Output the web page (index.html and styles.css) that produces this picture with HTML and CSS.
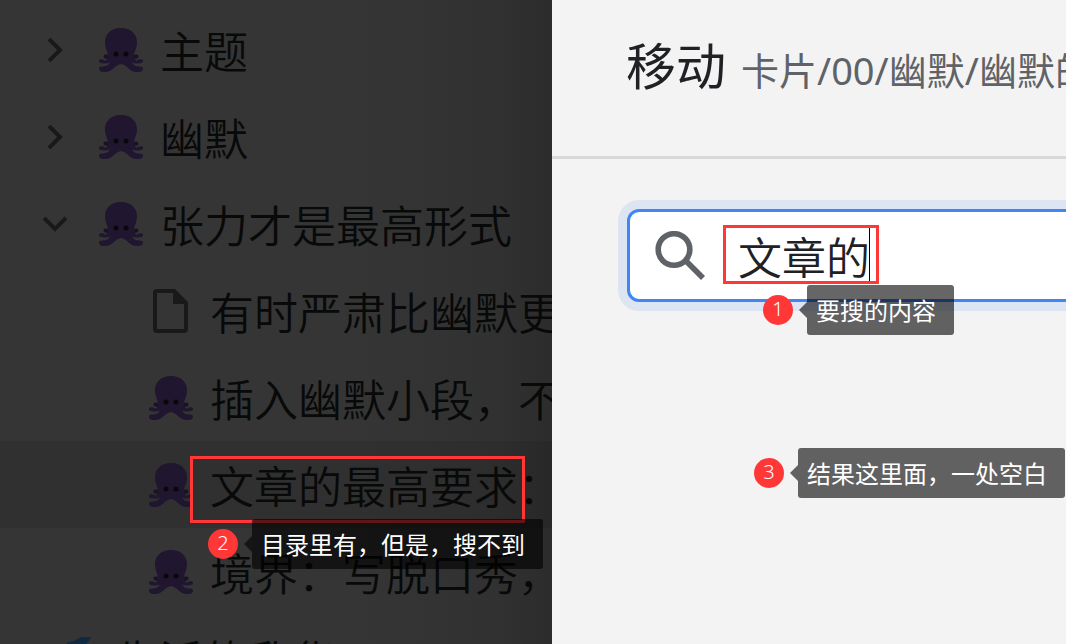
FILE: index.html
```
<!DOCTYPE html>
<html lang="zh-CN">
<head>
<meta charset="utf-8">
<title>移动</title>
<link rel="stylesheet" href="styles.css">
</head>
<body>
<svg class="defs" aria-hidden="true">
  <symbol id="octopus" viewBox="0 0 44 44">
    <path class="octo-arm" d="M6.500 28.500q2-.5 3 1.500l3 1M37.500 28.500q-2-.5-3 1.500l-3 1"/>
    <path class="octo-body" d="M22 0C11 0 6 7 6 14c0 7 3 9 3 15 0 2-1 3.500-3 3.500-2-1.500-5-1.500-6-.5s0 3.500 5 3.500c3 0 4-.3 6-1.300-2 3.500-4 4.300-8 4.300-2 0-3 .7-3 2 0 3 3 3.500 6 3.500 8 0 9-7 16-8 7 1 8 8 16 8 3 0 6-.5 6-3.500 0-1.300-1-2-3-2-4 0-6-.8-8-4.300 2 1 3 1.300 6 1.300 5 0 6-2.500 5-3.500s-4-1-6 .5c-2 0-3-1.500-3-3.500 0-6 3-8 3-15C38 7 33 0 22 0z"/>
    <circle class="octo-eye" cx="17" cy="26" r="2.5"/><circle class="octo-eye" cx="27" cy="26" r="2.5"/>
  </symbol>
  <symbol id="chevron" viewBox="0 0 24 24"><path class="chevron-line" d="M6 1l11 11L6 23"/></symbol>
  <symbol id="file" viewBox="0 0 36 44">
    <path class="file-shape" fill-rule="evenodd" d="M4 0h18l13 13v27a4 4 0 0 1-4 4H4a4 4 0 0 1-4-4V4a4 4 0 0 1 4-4zm0 4v36h27V15H20V4z"/>
  </symbol>
</svg>
<main class="screen">
  <nav class="sidebar" aria-label="目录">
    <ul class="tree">
      <li class="row"><svg class="chevron"><use href="#chevron"/></svg><svg class="icon"><use href="#octopus"/></svg><span>主题</span></li>
      <li class="row"><svg class="chevron"><use href="#chevron"/></svg><svg class="icon"><use href="#octopus"/></svg><span>幽默</span></li>
      <li class="row"><svg class="chevron open"><use href="#chevron"/></svg><svg class="icon"><use href="#octopus"/></svg><span>张力才是最高形式</span></li>
      <li class="row child"><svg class="icon"><use href="#file"/></svg><span>有时严肃比幽默更</span></li>
      <li class="row child"><svg class="icon"><use href="#octopus"/></svg><span>插入幽默小段，不</span></li>
      <li class="row child selected"><svg class="icon"><use href="#octopus"/></svg><span>文章的最高要求：</span></li>
      <li class="row child"><svg class="icon"><use href="#octopus"/></svg><span>境界：写脱口秀，</span></li>
      <li class="row root"><svg class="icon" viewBox="0 0 44 44"><path class="dolphin" d="M1 30C3 14 10 5 20 4c5-4 10-5 17-4-1 4-4 6-7 9 8 7 10 18 7 30-4-9-12-14-20-14-7 0-13 2-16 5z"/></svg><span>生活的乱华</span></li>
    </ul>
    <div class="mark mark-tree"></div>
    <div class="note note-tree"><b class="badge">2</b><span class="tip dark">目录里有，但是，搜不到</span></div>
  </nav>
  <section class="dialog">
    <header class="header"><h1 class="title">移动</h1><span class="path">卡片/00/幽默/幽默的</span></header>
    <div class="body">
      <label class="search">
        <svg class="glass" viewBox="0 0 50 50"><circle cx="19" cy="18.500" r="15.800"/><path class="handle" d="M31 30L48 47"/></svg>
        <input class="field" type="text" value="文章的" aria-label="搜索">
      </label>
    </div>
    <i class="caret"></i>
    <div class="mark mark-search"></div>
    <div class="note note-search"><b class="badge">1</b><span class="tip">要搜的内容</span></div>
    <div class="note note-result"><b class="badge">3</b><span class="tip">结果这里面，一处空白</span></div>
  </section>
</main>
</body>
</html>
```
FILE: styles.css
```
* { box-sizing: border-box; }
body { margin: 0; font-family: "Noto Sans", "Noto Sans CJK SC", sans-serif; }
.defs { position: absolute; width: 0; height: 0; }
.screen { display: grid; grid-template-columns: 276fr 257fr; height: 100vh; overflow: hidden; }

.sidebar { position: relative; min-width: 0; overflow: hidden; padding-top: 6px;
  background: linear-gradient(to right, #353535 65%, #313131 90%, #2c2c2c); }
.tree { list-style: none; margin: 0; padding: 0; }
.row { display: flex; align-items: center; height: 87px; padding-left: 43px; white-space: nowrap;
  color: #080909; font-size: 44px; line-height: 64px; font-family: "Noto Sans CJK SC", sans-serif; font-weight: 350; }
.row.child { padding-left: 149px; }
.row.root { padding-left: 54px; }
.row.selected { background: rgba(0, 0, 0, 0.08); }
.chevron { width: 24px; height: 24px; margin-right: 32px; flex: none; }
.chevron.open { transform: rotate(90deg); }
.icon { width: 44px; height: 44px; margin-right: 17px; flex: none; }
.chevron-line { fill: none; stroke: #17191b; stroke-width: 4; }
.file-shape { fill: #17191b; }
.octo-body { fill: #20162f; }
.octo-arm { fill: none; stroke: #1a1226; stroke-width: 4; stroke-linecap: round; }
.octo-eye { fill: #08080a; }
.dolphin { fill: #102a42; }

.dialog { position: relative; min-width: 0; overflow: hidden; background: #f3f3f3; color: #202124; }
.header { display: flex; align-items: baseline; gap: 15px; height: 159px; padding: 30px 0 0 74px;
  border-bottom: 3px solid #d9d9d9; white-space: nowrap; }
.title { margin: 0; font-size: 50px; line-height: 72px; font-weight: 400; }
.path { color: #5f6368; font-size: 38px; line-height: 56px; font-weight: 400; }
.body { padding: 50px 0 0 75px; }
.search { display: flex; align-items: center; height: 93px; margin-right: -20px; padding-left: 25px; gap: 33px;
  background: #fff; border: 3px solid #4285f4; border-radius: 12px; box-shadow: 0 0 0 9px #dde4f2; }
.glass { width: 50px; height: 50px; flex: none; fill: none; stroke: #5f6368; stroke-width: 5.6; }
.field { flex: 1; min-width: 0; height: 64px; padding: 0; border: 0; outline: 0; background: none; color: #202124;
  font: 350 44px/64px "Noto Sans CJK SC", sans-serif; }
.caret { position: absolute; left: 317px; top: 228px; width: 1px; height: 54px; background: #000; }

.mark { position: absolute; border: 3px solid #ff3737; }
.mark-tree { left: 190px; top: 456px; width: 335px; height: 67px; }
.mark-search { left: 171px; top: 225px; width: 156px; height: 59px; }
.note { position: absolute; display: flex; align-items: center; gap: 14px; white-space: nowrap; }
.note-tree { left: 208px; top: 519px; }
.note-search { left: 211px; top: 285px; }
.note-result { left: 202px; top: 448px; }
.badge { width: 30px; height: 30px; border-radius: 50%; background: #ff3737; color: #fff;
  font: 300 20px/28px "Noto Sans", sans-serif; text-align: center; }
.tip { position: relative; height: 50px; padding: 0 18px 0 9px; border-radius: 3px; background: rgba(0, 0, 0, 0.6);
  color: #fff; font-size: 24px; line-height: 50px; font-family: "Noto Sans CJK SC", sans-serif; }
.tip.dark { background: rgba(0, 0, 0, 0.62); }
.tip::before { content: ""; position: absolute; right: 100%; top: 17px; border: 8px solid transparent;
  border-left: 0; border-right-color: rgba(0, 0, 0, 0.6); }
```
